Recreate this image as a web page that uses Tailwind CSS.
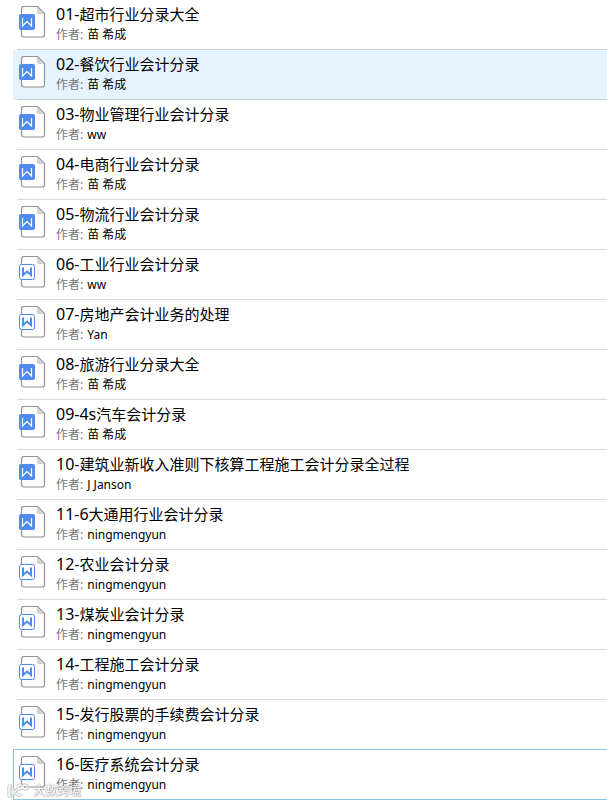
<!DOCTYPE html>
<html lang="zh-CN">
<head>
    <meta charset="UTF-8">
    <meta name="viewport" content="width=device-width, initial-scale=1.0">
    <script src="https://cdn.jsdelivr.net/npm/@tailwindcss/browser@4"></script>
    <title>会计分录</title>
</head>
<body class="bg-white font-['Noto_Sans','Noto_Sans_CJK_SC',sans-serif] text-black">
    <svg width="0" height="0" class="absolute" aria-hidden="true">
        <symbol id="page" viewBox="0 0 27 32">
            <path d="M5 .5H18.500L25.500 7.500V28.500Q25.500 31 23 31H5Q2.500 31 2.500 28.500V3Q2.500 .5 5 .5Z" fill="#fdfdfd" stroke="#929396" stroke-width="1.200"/>
            <path d="M18 1L25 8H20Q18 8 18 6Z" fill="#d0d1d3"/>
        </symbol>
        <!-- filled badge: doc, outlined badge: docx -->
        <symbol id="doc" viewBox="0 0 27 32">
            <use href="#page"/>
            <rect x="0" y="8" width="16" height="16" rx="2" fill="#5089ef"/>
            <path d="M3.500 12V20L8 15.500L12.500 20V12" fill="none" stroke="#fff" stroke-width="1.200"/>
        </symbol>
        <symbol id="docx" viewBox="0 0 27 32">
            <use href="#page"/>
            <rect x=".5" y="8.500" width="15" height="15" rx="2" fill="#fff" stroke="#5089ef"/>
            <path d="M4 11.500V19L8 15.500L12 19V11.500" fill="none" stroke="#5089ef" stroke-width="2"/>
        </symbol>
    </svg>

    <ul id="files" class="ml-[13px]"></ul>

    <div class="fixed bottom-1 left-[7px] flex items-center gap-1 opacity-80">
        <svg width="22" height="16" viewBox="0 0 22 16" fill="none" stroke-linecap="round" stroke-linejoin="round" aria-hidden="true">
            <g stroke="#aaa" stroke-width="3">
                <path d="M4 3H2V13H4M6 5V12M11 6L7 9L11 12H14"/>
                <circle cx="13" cy="4" r="2"/>
                <circle cx="18" cy="4" r="2"/>
            </g>
            <g stroke="#fff" stroke-width="1.500">
                <path d="M4 3H2V13H4M6 5V12M11 6L7 9L11 12H14"/>
                <circle cx="13" cy="4" r="2"/>
                <circle cx="18" cy="4" r="2"/>
            </g>
        </svg>
        <span class="text-[12px] leading-4 text-white [text-shadow:0_0_1px_#888,0_0_2px_#999,1px_1px_1px_#aaa]">大数跨境</span>
    </div>

    <script>
        const files = [
            ["01-", "超市行业分录大全", "苗 希成", "doc"],
            ["02-", "餐饮行业会计分录", "苗 希成", "doc"],
            ["03-", "物业管理行业会计分录", "ww", "doc"],
            ["04-", "电商行业会计分录", "苗 希成", "doc"],
            ["05-", "物流行业会计分录", "苗 希成", "doc"],
            ["06-", "工业行业会计分录", "ww", "docx"],
            ["07-", "房地产会计业务的处理", "Yan", "docx"],
            ["08-", "旅游行业分录大全", "苗 希成", "doc"],
            ["09-4s", "汽车会计分录", "苗 希成", "doc"],
            ["10-", "建筑业新收入准则下核算工程施工会计分录全过程", "J Janson", "doc"],
            ["11-6", "大通用行业会计分录", "ningmengyun", "doc"],
            ["12-", "农业会计分录", "ningmengyun", "docx"],
            ["13-", "煤炭业会计分录", "ningmengyun", "docx"],
            ["14-", "工程施工会计分录", "ningmengyun", "docx"],
            ["15-", "发行股票的手续费会计分录", "ningmengyun", "docx"],
            ["16-", "医疗系统会计分录", "ningmengyun", "docx"],
        ];
        const selected = 1;
        const focused = files.length - 1;

        document.getElementById("files").innerHTML = files.map(([number, name, author, icon], i) => {
            let row = "";
            let line = "ml-1 h-[50px] border-b border-b-[#d9d9d9]";
            if (i === selected) {
                row = "bg-[#e5f3ff]";
            }
            if (i === selected || i === selected - 1) {
                line = "ml-1 h-[50px] border-b border-b-[#c2d0dc]";
            }
            if (i === focused) {
                row = "relative -mt-px border-y border-l border-y-[#8cc4e2] border-l-[#8cc4e2]";
                line = "ml-[3px] h-[49px]";
            }
            return `
                <li class="${row}">
                    <a href="#" class="flex ${line}">
                        <svg width="27" height="32" class="mt-[6px] ml-[2px] shrink-0" aria-hidden="true"><use href="#${icon}"/></svg>
                        <span class="ml-[10px] min-w-0 pt-1">
                            <span class="block truncate text-[15px] leading-5"><span class="text-[16px]">${number}</span>${name}</span>
                            <span class="flex gap-1 text-[12px] leading-[22px]"><span class="text-[#777]">作者:</span><span>${author}</span></span>
                        </span>
                    </a>
                </li>`;
        }).join("");
    </script>
</body>
</html>
